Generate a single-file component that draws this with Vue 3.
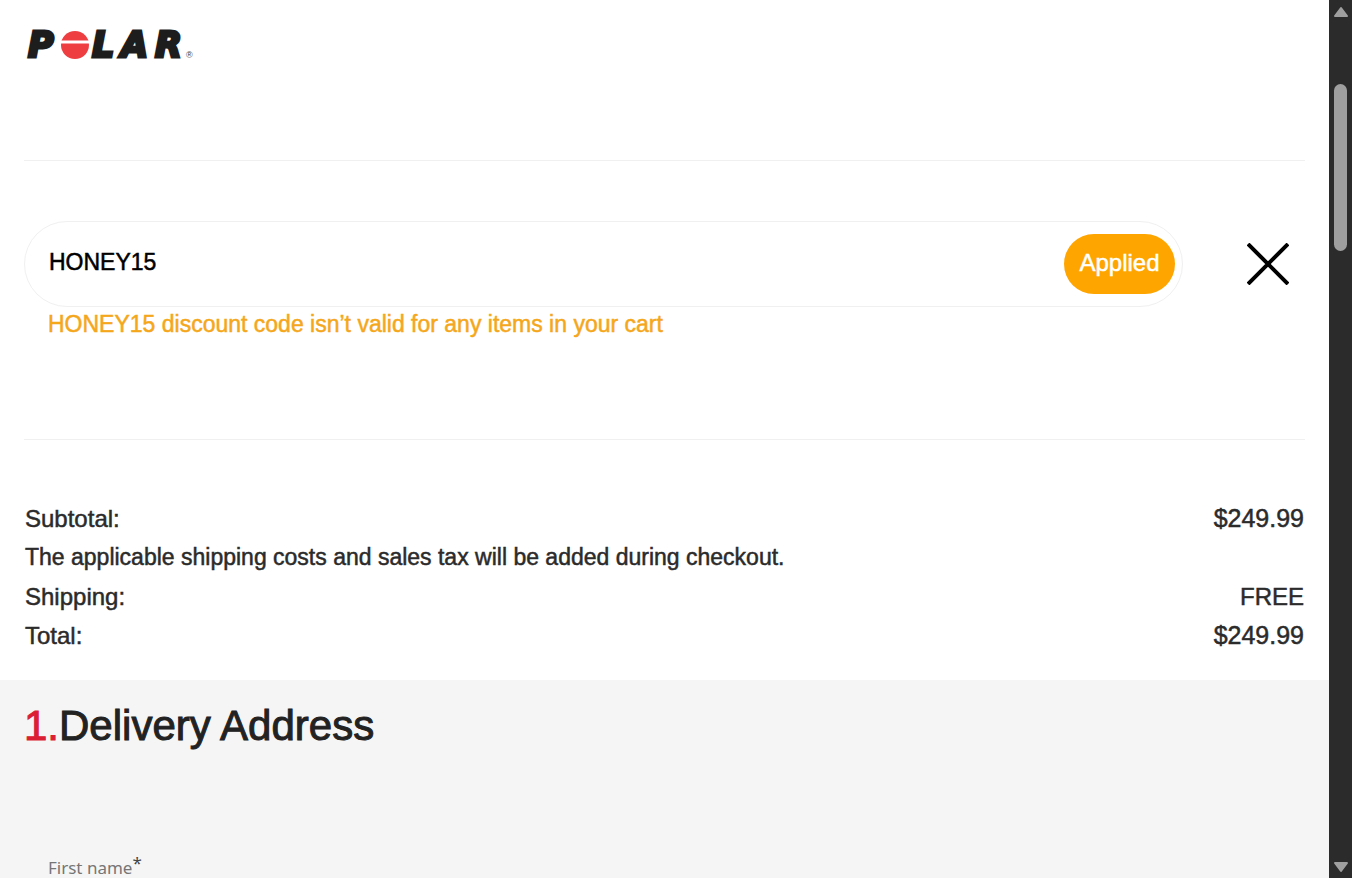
<script setup>
import { ref } from 'vue'

const code = ref('HONEY15')
const firstName = ref('')
</script>

<template>
  <div class="window">
    <main class="page">
      <header class="header">
        <a class="logo" href="#" aria-label="Polar">
          <svg width="180" height="60" viewBox="0 0 180 60">
            <g class="letters">
              <text x="4" y="42">P</text>
              <text x="68" y="42">L</text>
              <text x="97" y="42">A</text>
              <text x="131" y="42">R</text>
            </g>
            <circle cx="51" cy="30" r="14" fill="#ee3e42" />
            <path d="M37 27H65" stroke="#fff" stroke-width="3" />
            <text class="mark" x="162" y="43">®</text>
          </svg>
        </a>
      </header>

      <section class="discount">
        <div class="row">
          <div class="pill">
            <input v-model="code" class="code" type="text" aria-label="Discount code" />
            <button class="applied" type="button">Applied</button>
          </div>
          <button class="remove" type="button" aria-label="Remove discount code">
            <svg width="42" height="42" viewBox="0 0 42 42">
              <path d="M1 1L41 41M41 1L1 41" stroke="#000" stroke-width="4" />
            </svg>
          </button>
        </div>
        <p class="message">HONEY15 discount code isn’t valid for any items in your cart</p>
      </section>

      <section class="summary">
        <div class="line"><span>Subtotal:</span><span class="amount">$249.99</span></div>
        <p class="line note">The applicable shipping costs and sales tax will be added during checkout.</p>
        <div class="line"><span>Shipping:</span><span>FREE</span></div>
        <div class="line"><span>Total:</span><span class="amount">$249.99</span></div>
      </section>

      <section class="delivery">
        <h2><span class="step">1.</span>Delivery Address</h2>
        <div class="field">
          <label for="first-name">First name<span class="star">*</span></label>
          <input id="first-name" v-model="firstName" type="text" />
        </div>
      </section>
    </main>

    <div class="scrollbar" aria-hidden="true">
      <svg width="16" height="12" viewBox="0 0 16 12"><path d="M8 2L14 10H2Z" /></svg>
      <div class="track"><div class="thumb"></div></div>
      <svg width="16" height="12" viewBox="0 0 16 12"><path d="M8 10L14 2H2Z" /></svg>
    </div>
  </div>
</template>

<style>
body {
  margin: 0;
}
</style>

<style scoped>
.window {
  display: flex;
  height: 100vh;
  overflow: hidden;
  background: #fff;
  color: #2b2b2b;
  font-family: "Liberation Sans", Arial, sans-serif;
  font-size: 24px;
  -webkit-text-stroke: 0.5px currentColor;
  line-height: 39px;
}
.page {
  flex: 1;
  min-width: 0;
  display: flex;
  flex-direction: column;
}
.header {
  flex: none;
  height: 145px;
  margin: 0 24px;
  padding-top: 15px;
  border-bottom: 1px solid #f0f0f0;
}
.logo,
.logo svg {
  display: block;
  width: 180px;
}
.letters {
  font: italic bold 35px "DejaVu Sans", sans-serif;
  fill: #1d1d1d;
  stroke: #1d1d1d;
  stroke-width: 3px;
  -webkit-text-stroke: 3px #1d1d1d;
}
.mark {
  font: 9px "Liberation Sans", sans-serif;
  fill: #444;
  -webkit-text-stroke: 0;
}
.discount {
  flex: none;
  height: 218px;
  margin: 0 24px;
  padding-top: 60px;
  border-bottom: 1px solid #f0f0f0;
}
.row {
  display: flex;
  align-items: center;
}
.pill {
  flex: 1;
  min-width: 0;
  display: flex;
  align-items: center;
  box-sizing: border-box;
  height: 86px;
  padding: 0 7px 0 24px;
  border: 1px solid #f0f0f0;
  border-radius: 43px;
}
.code {
  flex: 1;
  min-width: 0;
  padding: 0 0 4px;
  border: 0;
  outline: 0;
  background: none;
  color: #000;
  font: inherit;
  font-size: 23px;
}
.applied {
  width: 111px;
  height: 60px;
  padding: 0 0 4px;
  border: 0;
  border-radius: 30px;
  background: #ffa500;
  color: #fff;
  font: inherit;
}
.remove {
  display: flex;
  margin: 0 16px 0 64px;
  padding: 0;
  border: 0;
  background: none;
}
.message {
  margin: 0 24px;
  font-size: 23px;
  line-height: 34px;
  color: #f5a71b;
}
.summary {
  flex: none;
  padding: 59px 25px 25px;
}
.line {
  display: flex;
  justify-content: space-between;
  margin: 0;
}
.note {
  font-size: 23px;
}
.amount {
  font-size: 25px;
}
.delivery {
  flex: 1 0 auto;
  padding: 16px 24px;
  background: #f5f5f5;
}
h2 {
  margin: 0;
  color: #222;
  font-size: 42px;
  font-weight: 400;
  line-height: 60px;
  -webkit-text-stroke: 1px currentColor;
}
.step {
  color: #dc1e35;
}
.field {
  display: flex;
  flex-direction: column;
  margin: 96px 24px 0;
  font: 17px/32px "Noto Sans", sans-serif;
  color: #757575;
  -webkit-text-stroke: 0;
}
.star {
  position: relative;
  top: -5px;
  color: #444;
}
.field input {
  height: 48px;
  border: 1px solid #ccc;
  font: inherit;
}
.scrollbar {
  flex: none;
  display: flex;
  flex-direction: column;
  align-items: center;
  box-sizing: border-box;
  width: 23px;
  padding: 6px 0 5px;
  background: #2b2b2b;
}
.scrollbar path {
  fill: #9f9f9f;
  stroke: #9f9f9f;
  stroke-width: 2px;
  stroke-linejoin: round;
}
.track {
  flex: 1;
  padding-top: 66px;
}
.thumb {
  width: 13px;
  height: 167px;
  border-radius: 7px;
  background: #9f9f9f;
}
</style>
